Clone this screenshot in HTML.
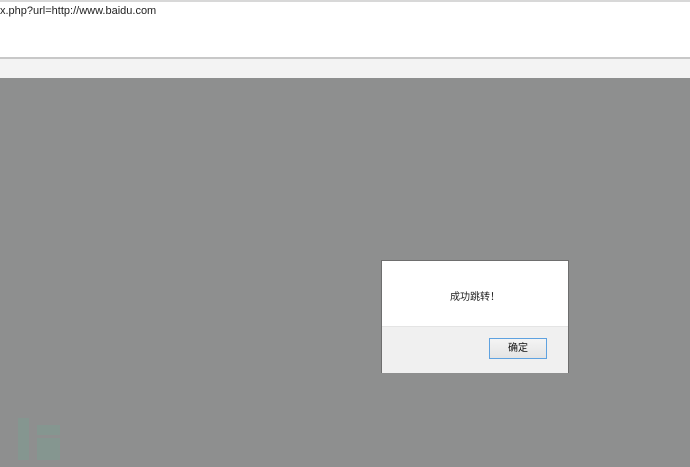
<!DOCTYPE html>
<html><head><style>
html,body{margin:0;padding:0;width:690px;height:467px;overflow:hidden;font-family:"Liberation Sans","Noto Sans CJK SC",sans-serif;}
.top{position:absolute;left:0;top:0;width:690px;height:57px;background:#fff;border-top:2px solid #d8d8d8;box-sizing:border-box;}
.url{position:absolute;left:0;top:3px;font-size:11px;color:#222;}
.line{position:absolute;left:0;top:57px;width:690px;height:2px;background:#c8c8c8;}
.bar{position:absolute;left:0;top:59px;width:690px;height:19px;background:#f3f3f3;}
.ov{position:absolute;left:0;top:78px;width:690px;height:389px;background:#8e8f8f;}
.dlg{position:absolute;left:381px;top:260px;width:188px;height:113px;background:#fff;border:1px solid #6e6e6e;box-sizing:border-box;}
.msg{position:absolute;left:0;width:100%;top:27px;text-align:center;font-size:10px;color:#222;}
.foot{position:absolute;left:0;top:65px;width:100%;height:46px;background:#f0f0f0;border-top:1px solid #e4e4e4;}
.btn{position:absolute;left:107px;top:11px;width:58px;height:21px;border:1px solid #5fa2e0;background:linear-gradient(#f4f4f4,#e4e4e4);box-sizing:border-box;font-size:10px;text-align:center;line-height:19px;color:#111;}
.wm{position:absolute;background:#859690;}
</style></head><body>
<div class="top"><div class="url">x.php?url=http://www.baidu.com</div></div>
<div class="line"></div><div class="bar"></div>
<div class="ov">
<div class="wm" style="left:18px;top:340px;width:11px;height:42px"></div>
<div class="wm" style="left:37px;top:347px;width:23px;height:10px"></div>
<div class="wm" style="left:37px;top:360px;width:23px;height:22px"></div>
</div>
<div class="dlg"><div class="msg">成功跳转！</div><div class="foot"><div class="btn">确定</div></div></div>
</body></html>
